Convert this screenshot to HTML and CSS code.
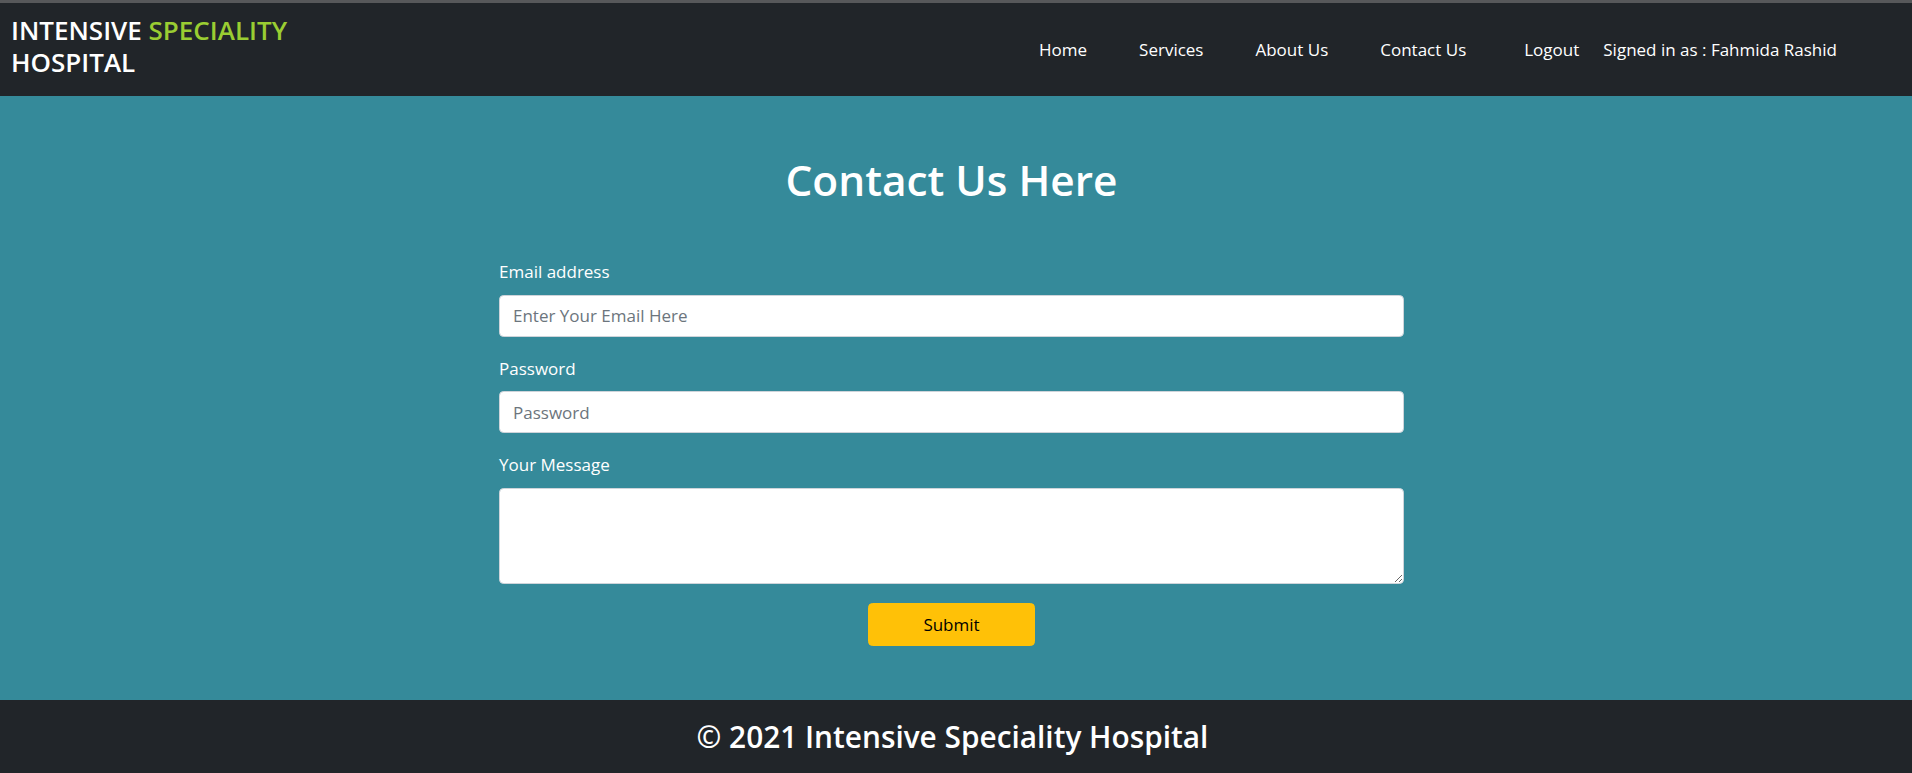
FILE: index.html
```html
<!DOCTYPE html>
<html lang="en">
<head>
<meta charset="utf-8">
<title>Contact Us - Intensive Speciality Hospital</title>
<link rel="stylesheet" href="styles.css">
</head>
<body>
<header class="navbar">
  <a class="brand" href="#">
    <span class="brand-line"><span class="brand-white">INTENSIVE</span> <span class="brand-green">SPECIALITY</span></span>
    <span class="brand-line brand-white">HOSPITAL</span>
  </a>
  <nav class="nav">
    <a class="nav-link nav-home" href="#">Home</a>
    <a class="nav-link" href="#">Services</a>
    <a class="nav-link" href="#">About Us</a>
    <a class="nav-link" href="#">Contact Us</a>
    <a class="nav-link nav-logout" href="#">Logout</a>
    <span class="nav-user">Signed in as : Fahmida Rashid</span>
  </nav>
</header>
<main class="main">
  <h1 class="title">Contact Us Here</h1>
  <form class="form">
    <div class="group">
      <label class="label" for="email">Email address</label>
      <input class="control" id="email" type="email" placeholder="Enter Your Email Here">
    </div>
    <div class="group">
      <label class="label" for="pass">Password</label>
      <input class="control" id="pass" type="password" placeholder="Password">
    </div>
    <div class="group">
      <label class="label" for="msg">Your Message</label>
      <textarea class="control textarea" id="msg"></textarea>
    </div>
    <div class="actions">
      <button class="btn" type="button">Submit</button>
    </div>
  </form>
</main>
<footer class="footer">
  <h3 class="footer-text">© 2021 Intensive Speciality Hospital</h3>
</footer>
</body>
</html>
```
FILE: styles.css
```css
* { box-sizing: border-box; }
html, body { margin: 0; padding: 0; }
body {
  font-family: "Open Sans", "Noto Sans", Arial, sans-serif;
  font-size: 17px;
  line-height: 1.5;
  color: #fff;
  background: #358a9a;
}
a { text-decoration: none; }

.navbar {
  display: flex;
  align-items: center;
  height: 96px;
  border-top: 3px solid #57585a;
  background: #212529;
  padding: 0 75px 0 11px;
}
.brand {
  display: flex;
  flex-direction: column;
  font-size: 26px;
  font-weight: 600;
  margin-top: -7px;
}
.brand-line {
  display: block;
  height: 32px;
  line-height: 32px;
}
.brand-white { color: #fff; }
.brand-green { color: #9acd32; }

.nav {
  margin-left: auto;
  display: flex;
  align-items: center;
}
.nav-link {
  color: #fff;
  font-size: 17px;
  line-height: 26px;
  margin-left: 52px;
}
.nav-home { margin-left: 0; }
.nav-logout { margin-left: 58px; }
.nav-user {
  margin-left: 24px;
  font-size: 17px;
  line-height: 26px;
}

.main {
  padding: 58.5px 9px 54px 0;
  display: flex;
  flex-direction: column;
  align-items: center;
}
.title {
  margin: 0 0 54px;
  font-size: 42.4px;
  line-height: 1.2;
  font-weight: 600;
}
.form {
  width: 905px;
}
.group {
  margin-bottom: 19px;
}
.label {
  display: block;
  height: 26px;
  line-height: 26px;
  margin-bottom: 9.5px;
}
.control {
  display: block;
  width: 100%;
  height: 42px;
  padding: 0 13px;
  font-family: inherit;
  font-size: 17px;
  color: #212529;
  background: #fff;
  border: 1px solid #ced4da;
  border-radius: 4.5px;
  outline: none;
}
.control::placeholder { color: #6c757d; }
.textarea {
  height: 96px;
  padding: 7px 13px;
  resize: vertical;
}
.actions {
  display: flex;
  justify-content: center;
}
.btn {
  width: 167px;
  height: 43px;
  background: #ffc107;
  border: 1px solid #ffc107;
  border-radius: 4.5px;
  color: #000;
  font-family: inherit;
  font-size: 17px;
  cursor: pointer;
}

.footer {
  background: #212529;
  height: 74px;
  display: flex;
  align-items: center;
  justify-content: center;
  padding-right: 7px;
}
.footer-text {
  margin: 0;
  font-size: 29.8px;
  line-height: 1.2;
  font-weight: 600;
}
```
